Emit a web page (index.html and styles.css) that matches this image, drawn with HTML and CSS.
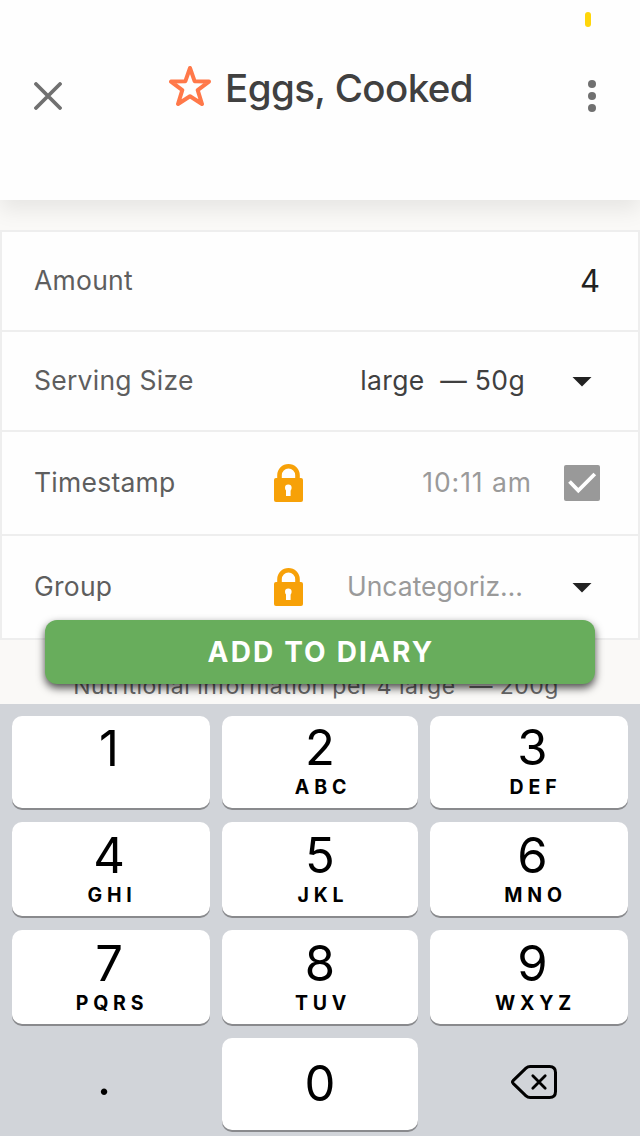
FILE: index.html
```html
<!DOCTYPE html>
<html lang="en">
<head>
    <meta charset="UTF-8">
    <meta name="viewport" content="width=device-width, initial-scale=1.0">
    <title>Eggs, Cooked</title>
    <link rel="stylesheet" href="styles.css">
</head>
<body>
    <header class="header">
        <div class="status-bar">
            <span class="status-pill"></span>
        </div>
        <div class="nav-bar">
            <button class="icon-btn" aria-label="Close">
                <svg width="28" height="28" viewBox="0 0 28 28">
                    <path d="M2 2L26 26M26 2L2 26" fill="none" stroke="#707070" stroke-width="3.8" stroke-linecap="round"/>
                </svg>
            </button>
            <h1 class="title">
                <svg class="star" width="42" height="42" viewBox="0 0 42 42">
                    <path d="M21 3L25.6 16.2L40 16.6L28.7 25.1L33 39L21 31.2L9 39L13.3 25.1L2 16.6L16.4 16.2Z" fill="none" stroke="#ff7849" stroke-width="4" stroke-linejoin="round"/>
                </svg>
                <span class="title-text">Eggs, Cooked</span>
            </h1>
            <button class="icon-btn" aria-label="More">
                <svg width="8" height="32" viewBox="0 0 8 32">
                    <g fill="#707070">
                        <circle cx="4" cy="4" r="4"/>
                        <circle cx="4" cy="16" r="4"/>
                        <circle cx="4" cy="28" r="4"/>
                    </g>
                </svg>
            </button>
        </div>
    </header>

    <main class="content">
        <div class="form-card">
            <div class="form-row">
                <span class="label">Amount</span>
                <span class="value value-amount">4</span>
            </div>
            <div class="form-row">
                <span class="label">Serving Size</span>
                <span class="value value-serving">large&nbsp; — 50g</span>
                <span class="caret"></span>
            </div>
            <div class="form-row form-row-tall">
                <span class="label">Timestamp</span>
                <svg class="lock" width="30" height="38" viewBox="0 0 30 38">
                    <path d="M5.5 16V11.3a9 9 0 0 1 18 0V16" fill="none" stroke="#f7a108" stroke-width="4.6"/>
                    <rect x="0" y="14" width="29" height="24" rx="2" fill="#f7a108"/>
                    <circle cx="14.3" cy="23.7" r="3.3" fill="#fff"/>
                    <rect x="12" y="25" width="4.6" height="7" fill="#fff"/>
                </svg>
                <span class="value value-muted value-time">10:11 am</span>
                <span class="checkbox">
                    <svg width="36" height="36" viewBox="0 0 36 36">
                        <path d="M5.5 16.5L14.3 25.5L30.8 9" fill="none" stroke="#fff" stroke-width="3.8"/>
                    </svg>
                </span>
            </div>
            <div class="form-row form-row-tall">
                <span class="label">Group</span>
                <svg class="lock" width="30" height="38" viewBox="0 0 30 38">
                    <path d="M5.5 16V11.3a9 9 0 0 1 18 0V16" fill="none" stroke="#f7a108" stroke-width="4.6"/>
                    <rect x="0" y="14" width="29" height="24" rx="2" fill="#f7a108"/>
                    <circle cx="14.3" cy="23.7" r="3.3" fill="#fff"/>
                    <rect x="12" y="25" width="4.6" height="7" fill="#fff"/>
                </svg>
                <span class="value value-muted value-group">Uncategoriz…</span>
                <span class="caret"></span>
            </div>
        </div>
        <p class="nutrition-note">Nutritional information per 4 large&nbsp; — 200g</p>
        <button class="add-btn">ADD TO DIARY</button>
    </main>

    <div class="keypad">
        <button class="key"><span class="digit">1</span></button>
        <button class="key"><span class="digit">2</span><span class="letters">ABC</span></button>
        <button class="key"><span class="digit">3</span><span class="letters">DEF</span></button>
        <button class="key"><span class="digit">4</span><span class="letters">GHI</span></button>
        <button class="key"><span class="digit">5</span><span class="letters">JKL</span></button>
        <button class="key"><span class="digit">6</span><span class="letters">MNO</span></button>
        <button class="key"><span class="digit">7</span><span class="letters">PQRS</span></button>
        <button class="key"><span class="digit">8</span><span class="letters">TUV</span></button>
        <button class="key"><span class="digit">9</span><span class="letters">WXYZ</span></button>
        <button class="key key-plain key-dot"><span class="digit">.</span></button>
        <button class="key key-zero"><span class="digit">0</span></button>
        <button class="key key-plain key-delete" aria-label="Delete">
            <svg width="46" height="34" viewBox="0 0 46 34">
                <g fill="none" stroke="#000" stroke-width="3" stroke-linejoin="round" stroke-linecap="round">
                    <path d="M19.2 1.5H38.5Q44.5 1.5 44.5 7.5V26.5Q44.5 32.5 38.5 32.5H19.2Q16.8 32.5 15 30.8L2.1 18.3Q.9 17 2.1 15.7L15 3.2Q16.8 1.5 19.2 1.5Z"/>
                    <path d="M21.8 10.8L34.2 23.2M34.2 10.8L21.8 23.2" stroke-width="2.8"/>
                </g>
            </svg>
        </button>
    </div>
</body>
</html>
```
FILE: styles.css
```css
:root {
    --border: #eeeeee;
    --text-dark: #404040;
    --text-label: #5e5e5e;
    --text-muted: #9a9a9a;
    --green: #68ad5c;
    --keypad-bg: #d1d4d9;
}

* {
    box-sizing: border-box;
}

body {
    margin: 0;
    width: 640px;
    height: 1136px;
    display: flex;
    flex-direction: column;
    overflow: hidden;
    font-family: Inter, "Liberation Sans", sans-serif;
    background-color: #faf9f7;
}

button {
    border: none;
    padding: 0;
    background: none;
    font-family: inherit;
    cursor: pointer;
}

svg {
    display: block;
}

.header {
    height: 200px;
    flex: none;
    background-color: #fefefe;
    box-shadow: 0 10px 20px rgba(0, 0, 0, 0.08);
    z-index: 1;
}

.status-bar {
    display: flex;
    justify-content: flex-end;
    height: 40px;
    padding: 12px 49px 0 0;
}

.status-pill {
    width: 6px;
    height: 15px;
    border-radius: 3px;
    background-color: #ffd60a;
}

.nav-bar {
    display: flex;
    align-items: center;
    justify-content: space-between;
    height: 112px;
    padding: 0 32px;
}

.icon-btn {
    display: flex;
    align-items: center;
    justify-content: center;
    width: 32px;
    height: 32px;
}

.title {
    display: flex;
    align-items: center;
    gap: 14px;
    margin: 0;
    padding: 0 0 17px 2px;
    font-size: 38.5px;
    font-weight: 500;
    line-height: 48px;
    color: var(--text-dark);
}

.star {
    margin-top: -4px;
}

.title-text {
    letter-spacing: -0.6px;
}

.content {
    position: relative;
    height: 504px;
    flex: none;
    padding-top: 30px;
    overflow: hidden;
}

.form-card {
    border: 2px solid var(--border);
    background-color: #fefefe;
}

.form-row {
    display: flex;
    align-items: center;
    height: 100px;
    padding: 0 38px 0 32px;
    border-bottom: 2px solid var(--border);
    font-size: 26.5px;
}

.form-row-tall {
    height: 104px;
}

.form-row:last-child {
    height: 102px;
    border-bottom: none;
}

.label,
.value {
    padding-bottom: 1px;
    line-height: 33px;
    white-space: nowrap;
}

.label {
    width: 240px;
    letter-spacing: 0.25px;
    color: var(--text-label);
}

.value {
    margin-left: auto;
    color: var(--text-dark);
}

.value-amount {
    font-size: 31px;
    color: #222;
}

.value-serving {
    margin-right: 47px;
    letter-spacing: 0.35px;
}

.value-muted {
    color: var(--text-muted);
}

.value-time {
    margin-right: 32px;
    letter-spacing: 0.95px;
}

.value-group {
    margin-right: 49px;
    letter-spacing: 0;
}

.caret {
    width: 20px;
    height: 10px;
    margin: 1px 8px 0 0;
    background-color: #222;
    clip-path: polygon(0 0, 100% 0, 50% 100%);
}

.checkbox {
    width: 36px;
    height: 36px;
    border-radius: 2px;
    background-color: #999;
}

.nutrition-note {
    margin: 31px 0 0;
    padding-right: 8px;
    font-size: 23px;
    line-height: 30px;
    letter-spacing: 0.45px;
    text-align: center;
    color: #6a6a6a;
}

/* Floats over the bottom of the form */
.add-btn {
    position: absolute;
    left: 45px;
    right: 45px;
    bottom: 20px;
    height: 64px;
    padding: 0 0 0 2px;
    border-radius: 12px;
    background-color: var(--green);
    box-shadow: 0 4px 8px rgba(0, 0, 0, 0.7);
    color: #fff;
    font-size: 28px;
    font-weight: 700;
    letter-spacing: 2.15px;
}

.keypad {
    display: grid;
    grid-template-columns: 198px 196px 198px;
    grid-template-rows: 92px 94px 94px 92px;
    gap: 14px 12px;
    flex: 1;
    padding: 12px;
    background-color: var(--keypad-bg);
}

.key {
    display: flex;
    flex-direction: column;
    align-items: center;
    justify-content: flex-end;
    padding-bottom: 9px;
    border-radius: 10px;
    background-color: #fff;
    box-shadow: 0 2px 0 #898a8d;
    color: #000;
}

.key:nth-child(3n + 1) {
    padding-right: 4px;
}

.key:nth-child(3n) {
    padding-left: 7px;
}

.key:first-child {
    justify-content: flex-start;
    padding-top: 8px;
}

.key-plain {
    background: none;
    box-shadow: none;
}

.key-zero {
    justify-content: center;
    padding-bottom: 1px;
}

.key.key-delete {
    justify-content: center;
    padding: 0 0 4px 10px;
}

.key.key-dot {
    padding: 0 14px 27px 0;
}

.digit {
    font-size: 49px;
    line-height: 50px;
}

.letters {
    margin-top: 2px;
    padding-left: 6px;
    font-size: 19.5px;
    font-weight: 700;
    line-height: 24px;
    letter-spacing: 4.8px;
}
```
